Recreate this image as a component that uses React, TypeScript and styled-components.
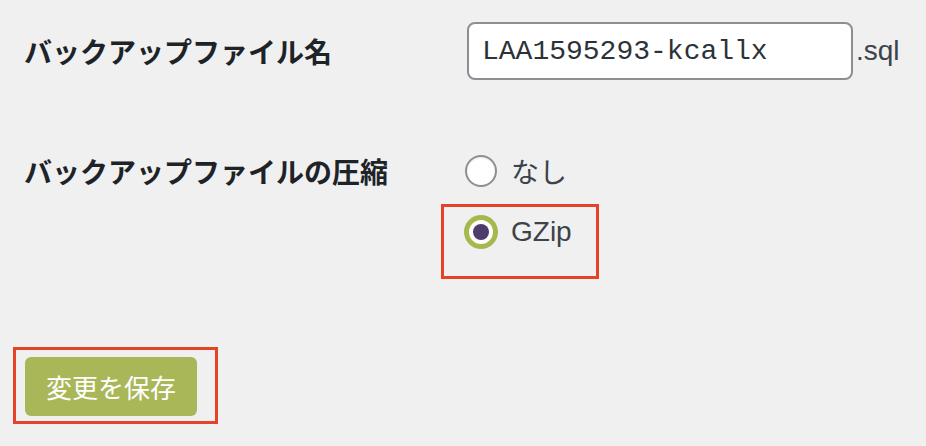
import styled, { createGlobalStyle } from "styled-components"

const GlobalStyle = createGlobalStyle`
  html, body {
    margin: 0;
    padding: 0;
    background: #f0f0f1;
  }
  body {
    font-family: "Liberation Sans", "Noto Sans CJK JP", sans-serif;
    color: #3c434a;
  }
`

export default function App() {
  return <>
    <GlobalStyle />
    <Form>
      <Row $align={'center'}>
        <Label>バックアップファイル名</Label>
        <Field>
          <TextInput defaultValue="LAA1595293-kcallx" />
          <Suffix>.sql</Suffix>
        </Field>
      </Row>
      <Row $align={'start'} $gap={75}>
        <Label>バックアップファイルの圧縮</Label>
        <RadioList>
          <RadioItem>
            <Radio />
            <RadioText $jp>なし</RadioText>
          </RadioItem>
          <Mark $top={-12} $right={-27} $bottom={-31} $left={-24}>
            <RadioItem>
              <Radio $checked />
              <RadioText>GZip</RadioText>
            </RadioItem>
          </Mark>
        </RadioList>
      </Row>
      <Actions>
        <Mark $top={-10} $right={-21} $bottom={-8} $left={-12}>
          <SaveButton>変更を保存</SaveButton>
        </Mark>
      </Actions>
    </Form>
  </>
}

const Form = styled.div`
  padding: 22px 0 30px 24px;
  display: flex;
  flex-direction: column;
`

const Row = styled.div<{ $align: string; $gap?: number }>`
  display: grid;
  grid-template-columns: 441px 1fr;
  align-items: ${({ $align }) => $align};
  margin-top: ${({ $gap }) => ($gap ? `${$gap}px` : 0)};
`

const Label = styled.div`
  font-family: "Noto Sans CJK JP", sans-serif;
  font-weight: 700;
  font-size: 28px;
  line-height: 32px;
  color: #1d2327;
  white-space: nowrap;
`

const Field = styled.div`
  display: flex;
  align-items: center;
  gap: 3px;
  padding-left: 2px;
`

const TextInput = styled.input`
  box-sizing: border-box;
  width: 386px;
  height: 58px;
  padding: 0 13px;
  border: 2px solid #8c8f94;
  border-radius: 8px;
  background: #fff;
  font-family: "Liberation Mono", monospace;
  font-size: 28px;
  color: #2c3338;
  outline: none;
`

const Suffix = styled.span`
  font-size: 28px;
  color: #3c434a;
`

const RadioList = styled.div`
  display: flex;
  flex-direction: column;
  align-items: flex-start;
  gap: 29px;
`

const RadioItem = styled.label`
  display: flex;
  align-items: center;
  gap: 14px;
  height: 32px;
`

const Radio = styled.span<{ $checked?: boolean }>`
  box-sizing: border-box;
  display: flex;
  align-items: center;
  justify-content: center;
  width: 32px;
  height: 32px;
  border-radius: 50%;
  background: #fff;
  border: ${({ $checked }) => ($checked ? '4px solid #a6b84e' : '2px solid #8c8f94')};
  box-shadow: ${({ $checked }) => ($checked ? '0 0 0 1px #a6b84e' : 'inset 0 1px 2px rgba(0,0,0,.1)')};
  &::before {
    content: '';
    display: ${({ $checked }) => ($checked ? 'block' : 'none')};
    width: 16px;
    height: 16px;
    border-radius: 50%;
    background: #4e3c6b;
  }
`

const RadioText = styled.span<{ $jp?: boolean }>`
  font-family: ${({ $jp }) => ($jp ? '"Noto Sans CJK JP", sans-serif' : '"Liberation Sans", sans-serif')};
  font-size: 28px;
  line-height: 32px;
  color: #3c434a;
`

const Mark = styled.div<{ $top: number; $right: number; $bottom: number; $left: number }>`
  position: relative;
  display: flex;
  width: fit-content;
  &::after {
    content: '';
    position: absolute;
    top: ${({ $top }) => $top}px;
    right: ${({ $right }) => $right}px;
    bottom: ${({ $bottom }) => $bottom}px;
    left: ${({ $left }) => $left}px;
    border: 3px solid #e4432a;
    pointer-events: none;
  }
`

const Actions = styled.div`
  margin-top: 109px;
  padding-left: 1px;
`

const SaveButton = styled.button`
  box-sizing: border-box;
  height: 59px;
  padding: 0 21px;
  border: none;
  border-radius: 6px;
  background: #a9b759;
  color: #fff;
  font-family: "Noto Sans CJK JP", sans-serif;
  font-size: 26px;
  cursor: pointer;
`
